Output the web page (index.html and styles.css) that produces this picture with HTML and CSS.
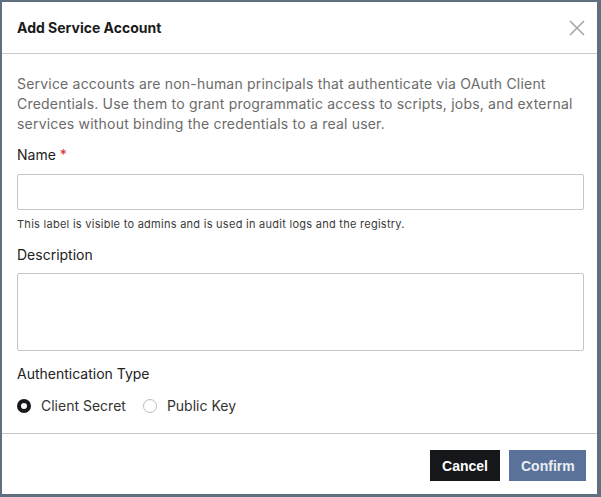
FILE: index.html
```html
<!DOCTYPE html>
<html lang="en">
<head>
  <meta charset="UTF-8" />
  <title>Add Service Account</title>
  <link rel="stylesheet" href="styles.css">
</head>
<body>

<div class="dialog">
  <div class="dialog-header">
    <h2>Add Service Account</h2>
    <button class="close" type="button" aria-label="Close">
      <svg width="16" height="16" viewBox="0 0 16 16"><path d="M1 1L15 15M15 1L1 15" stroke="#a3a3a3" stroke-width="1.5" fill="none"/></svg>
    </button>
  </div>

  <div class="dialog-body">
    <p class="intro">Service accounts are non-human principals that authenticate via OAuth Client Credentials. Use them to grant programmatic access to scripts, jobs, and external services without binding the credentials to a real user.</p>

    <label class="field-label" for="name">Name <span class="req">*</span></label>
    <input class="text-input" type="text" id="name">
    <p class="hint">This label is visible to admins and is used in audit logs and the registry.</p>

    <label class="field-label desc-label" for="desc">Description</label>
    <textarea class="text-area" id="desc"></textarea>

    <div class="field-label auth-label">Authentication Type</div>
    <div class="radios">
      <label class="radio"><span class="dot checked"></span>Client Secret</label>
      <label class="radio"><span class="dot"></span>Public Key</label>
    </div>
  </div>

  <div class="dialog-footer">
    <button class="btn btn-cancel" type="button">Cancel</button>
    <button class="btn btn-confirm" type="button">Confirm</button>
  </div>
</div>

</body>
</html>
```

FILE: styles.css
```css
html, body {
  margin: 0;
  padding: 0;
  background-color: #5f6f7f;
  height: 100%;
}
body {
  padding: 2px 4px 3px 2px;
  box-sizing: border-box;
  font-family: Inter, "Noto Sans", sans-serif;
  color: #1f1f1f;
}
.dialog {
  background: #fff;
  width: 595px;
  height: 492px;
  display: flex;
  flex-direction: column;
}
.dialog-header {
  height: 51px;
  border-bottom: 1px solid #c8c8c8;
  display: flex;
  align-items: center;
  justify-content: space-between;
  padding: 0 12px 0 15px;
}
.dialog-header h2 {
  margin: 0;
  font-size: 14px;
  font-weight: 700;
  color: #1b1b1b;
}
.close {
  border: none;
  background: none;
  padding: 0;
  display: flex;
}
.dialog-body {
  padding: 20px 13px 0 15px;
  flex: 1;
}
.intro {
  margin: 0;
  font-size: 14px;
  line-height: 20px;
  letter-spacing: 0.2px;
  color: #6b6b6b;
}
.field-label {
  display: block;
  font-size: 14px;
  line-height: 20px;
  margin-top: 11px;
  color: #222;
}
.req {
  color: #d0302f;
}
.text-input, .text-area {
  display: block;
  width: 100%;
  box-sizing: border-box;
  border: 1px solid #c6c6c6;
  border-radius: 2px;
  margin-top: 9px;
  font-family: inherit;
}
.text-input {
  height: 36px;
}
.text-area {
  height: 78px;
  margin-top: 8px;
  resize: none;
}
.hint {
  margin: 6px 0 0;
  font-size: 11px;
  line-height: 16px;
  letter-spacing: 0.27px;
  color: #3a3a3a;
}
.desc-label {
  margin-top: 13px;
}
.auth-label {
  margin-top: 13px;
}
.radios {
  display: flex;
  gap: 17px;
  margin-top: 13px;
}
.radio {
  display: flex;
  align-items: center;
  gap: 10px;
  font-size: 14px;
  color: #333;
}
.dot {
  width: 14px;
  height: 14px;
  border-radius: 50%;
  border: 1px solid #bdbdbd;
  box-sizing: border-box;
}
.dot.checked {
  border: 4.5px solid #17181b;
  background: #fff;
}
.dialog-footer {
  border-top: 1px solid #c8c8c8;
  height: 61px;
  display: flex;
  justify-content: flex-end;
  align-items: center;
  gap: 9px;
  padding: 3px 11px 0 0;
  box-sizing: border-box;
}
.btn {
  height: 31px;
  border: none;
  font-family: "Liberation Sans", Arial, sans-serif;
  font-size: 14px;
  font-weight: 700;
  color: #fff;
  padding: 0 12px;
}
.btn-cancel {
  background: #15171a;
  width: 70px;
}
.btn-confirm {
  background: #5a7299;
  color: #e9edf3;
  width: 77px;
}
```
